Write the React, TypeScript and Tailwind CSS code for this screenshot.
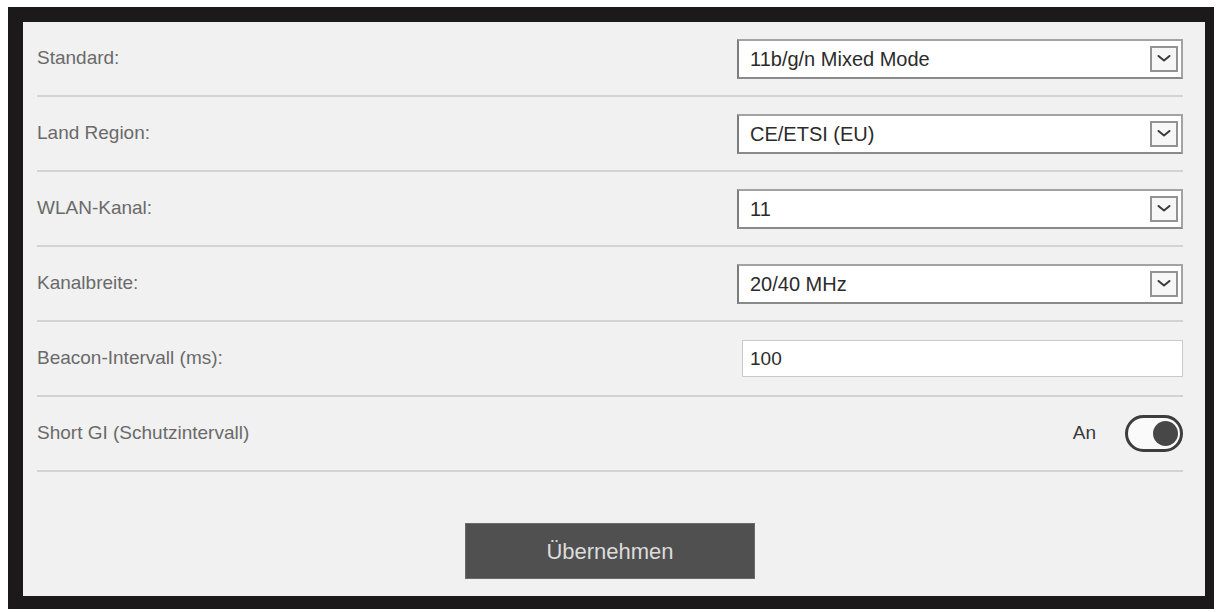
import React, { useState } from 'react';

const FONT = { fontFamily: '"Liberation Sans", Arial, sans-serif' };

function SelectArrow() {
  return (
    <span className="flex h-[26px] w-[28px] items-center justify-center border-2 border-[#939393] bg-[#f7f7f7]">
      <svg width="14" height="9" viewBox="0 0 14 9" fill="none">
        <path d="M1.5 2l5.5 4.5L12.5 2" stroke="#3a3a3a" strokeWidth="2" strokeLinecap="round" strokeLinejoin="round" />
      </svg>
    </span>
  );
}

function SelectBox({ value }: { value: string }) {
  return (
    <div className="flex h-[40px] w-[446px] items-center justify-between border-2 border-[#a3a3a3] border-l-[#7c7c7c] border-b-[#8a8a8a] bg-white pl-[11px] pr-[3px]">
      <span className="text-[20px] text-[#2b2b2b]">{value}</span>
      <SelectArrow />
    </div>
  );
}

function Row({ label, children }: { label: string; children: React.ReactNode }) {
  return (
    <div className="flex h-[75px] items-center justify-between border-b-2 border-[#d3d3d3]">
      <span className="text-[19px] text-[#6a6a6a]">{label}</span>
      {children}
    </div>
  );
}

export default function App() {
  const [shortGi, setShortGi] = useState(true);
  const [beacon, setBeacon] = useState('100');

  return (
    <div className="min-h-screen bg-white pl-[8px] pt-[7px]" style={FONT}>
      <div className="h-[602px] w-[1206px] border-b-[13px] border-l-[15px] border-r-[9px] border-t-[15px] border-[#1b1919] bg-[#f1f1f1]">
        <div className="flex h-full flex-col pl-[14px] pr-[22px]">
          <Row label="Standard:">
            <SelectBox value="11b/g/n Mixed Mode" />
          </Row>
          <Row label="Land Region:">
            <SelectBox value="CE/ETSI (EU)" />
          </Row>
          <Row label="WLAN-Kanal:">
            <SelectBox value="11" />
          </Row>
          <Row label="Kanalbreite:">
            <SelectBox value="20/40 MHz" />
          </Row>
          <Row label="Beacon-Intervall (ms):">
            <input
              value={beacon}
              onChange={(e) => setBeacon(e.target.value)}
              className="h-[37px] w-[441px] border border-[#c9c9c9] bg-white px-[7px] text-[19px] text-[#2b2b2b] outline-none"
              style={FONT}
            />
          </Row>
          <Row label="Short GI (Schutzintervall)">
            <div className="flex items-center gap-[29px]">
              <span className="text-[19px] text-[#3a3a3a]">{shortGi ? 'An' : 'Aus'}</span>
              <button
                type="button"
                onClick={() => setShortGi(!shortGi)}
                className={`flex h-[37px] w-[58px] items-center rounded-full border-[3px] border-[#3d3d3d] bg-[#fafafa] px-[2px] ${shortGi ? 'justify-end' : 'justify-start'}`}
              >
                <span className="h-[25px] w-[25px] rounded-full bg-[#474747]" />
              </button>
            </div>
          </Row>
          <div className="flex justify-center pt-[51px]">
            <button
              type="button"
              className="h-[56px] w-[290px] border border-[#6a6a6a] bg-[#505050] text-[22px] text-[#dcdcdc]"
              style={FONT}
            >
              Übernehmen
            </button>
          </div>
        </div>
      </div>
    </div>
  );
}
